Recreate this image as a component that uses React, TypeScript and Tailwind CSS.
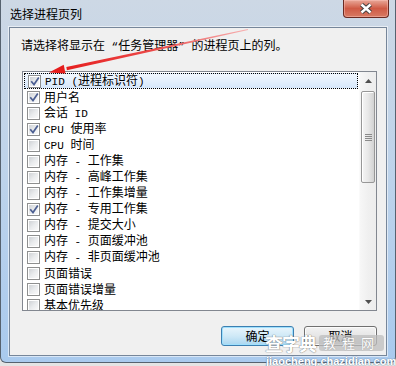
import React from "react";

const items: [string, boolean][] = [
  ["PID (进程标识符)", true],
  ["用户名", true],
  ["会话 ID", false],
  ["CPU 使用率", true],
  ["CPU 时间", false],
  ["内存 - 工作集", false],
  ["内存 - 高峰工作集", false],
  ["内存 - 工作集增量", false],
  ["内存 - 专用工作集", true],
  ["内存 - 提交大小", false],
  ["内存 - 页面缓冲池", false],
  ["内存 - 非页面缓冲池", false],
  ["页面错误", false],
  ["页面错误增量", false],
  ["基本优先级", false],
];

function Txt({ text }: { text: string }) {
  const parts = text.split(/([ -~“”]+)/).filter((p) => p.length > 0);
  return (
    <>
      {parts.map((p, i) =>
        /^[ -~“”]+$/.test(p) ? (
          <span key={i} className="font-['Liberation_Mono',monospace] text-[11px] whitespace-pre">
            {p}
          </span>
        ) : (
          <span key={i}>{p}</span>
        )
      )}
    </>
  );
}

function Check({ checked }: { checked: boolean }) {
  return (
    <div className="w-[13px] h-[13px] border border-[#8e8f8f] bg-white p-[1px] shrink-0">
      <div className="relative w-full h-full bg-gradient-to-br from-[#cfd2d6] via-[#e9ebed] to-[#fafafa]">
        {checked && (
          <svg className="absolute left-[-1px] top-[-1px]" width="11" height="11" viewBox="0 0 11 11">
            <path d="M2.2 5.2 L5 8.6 L9.8 1.6" stroke="#4c5f92" strokeWidth="1.7" fill="none" />
          </svg>
        )}
      </div>
    </div>
  );
}

function ScrollBar() {
  return (
    <div className="w-[17px] shrink-0 flex flex-col bg-gradient-to-r from-[#f7f7f7] via-[#f0f0f0] to-[#ededed] border-l border-[#fafafa]">
      <div className="h-[17px] flex items-center justify-center shrink-0">
        <svg width="7" height="4" viewBox="0 0 7 4">
          <path d="M0 4 L3.5 0 L7 4 Z" fill="#4f4f4f" />
        </svg>
      </div>
      <div className="mt-[2px] mx-[1px] h-[92px] shrink-0 rounded-[2px] border border-[#979797] bg-gradient-to-r from-[#f5f5f5] via-[#e8e8e8] to-[#d2d2d2] flex items-center justify-center shadow-[inset_1px_1px_0_#ffffff]">
        <div className="flex flex-col gap-[1px]">
          <div className="w-[7px] h-[1px] bg-[#8a8a8a]" />
          <div className="w-[7px] h-[1px] bg-[#8a8a8a]" />
          <div className="w-[7px] h-[1px] bg-[#8a8a8a]" />
          <div className="w-[7px] h-[1px] bg-[#8a8a8a]" />
        </div>
      </div>
      <div className="flex-1" />
      <div className="h-[17px] flex items-center justify-center shrink-0">
        <svg width="7" height="4" viewBox="0 0 7 4">
          <path d="M0 0 L3.5 4 L7 0 Z" fill="#4f4f4f" />
        </svg>
      </div>
    </div>
  );
}

export default function App() {
  return (
    <div className="relative w-[396px] h-[366px] bg-[#e4e4e4] overflow-hidden font-['Noto_Sans_CJK_SC',sans-serif] text-[12px] leading-[16px] text-black">
      <div className="w-[396px] h-[363px] flex flex-col rounded-b-[6px] border-x border-b border-[#56626f] bg-gradient-to-b from-[#cdd8e5] via-[#bdd3eb] to-[#a9caee]">
        {/* title bar */}
        <div className="h-[27px] flex items-start pl-[9px] pr-[6px] shrink-0">
          <div className="mt-[6px]">选择进程页列</div>
          <div className="ml-auto w-[46px] h-[18px] rounded-b-[4px] border border-t-0 border-[#6a2a22] bg-gradient-to-b from-[#e8a899] via-[#cf5a45] to-[#d77a63] flex items-center justify-center shadow-[inset_0_0_0_1px_rgba(255,200,190,0.45)]">
            <svg width="14" height="11" viewBox="0 0 14 11">
              <path d="M2.5 1.5 L11.5 9.5 M11.5 1.5 L2.5 9.5" stroke="#3f3f3f" strokeWidth="4.4" fill="none" />
              <path d="M2.5 1.5 L11.5 9.5 M11.5 1.5 L2.5 9.5" stroke="#ffffff" strokeWidth="2.4" fill="none" />
            </svg>
          </div>
        </div>

        {/* client area */}
        <div className="mx-[8px] mb-[6px] flex-1 border border-[#76869a] bg-[#f0f0f0] flex flex-col pl-[12px] pr-[9px] shadow-[0_0_0_1px_rgba(255,255,255,0.55)]">
          <div className="mt-[9px] ml-[-1px] h-[16px] whitespace-nowrap">
            <Txt text="请选择将显示在 “任务管理器” 的进程页上的列。" />
          </div>

          <div className="mt-[18px] h-[240px] border border-[#828790] bg-white flex">
            <div className="flex-1 pt-[1px] pl-[1px] pr-[1px] overflow-hidden">
              {items.map(([label, checked], i) => (
                <div
                  key={i}
                  className={
                    "h-[16px] flex items-center pl-[3px] " +
                    (i === 0
                      ? "border border-dotted border-black bg-gradient-to-b from-[#f1f7fe] to-[#d6e7fb] pl-[2px]"
                      : "")
                  }
                >
                  <Check checked={checked} />
                  <div className="ml-[4px] whitespace-nowrap">
                    <Txt text={label} />
                  </div>
                </div>
              ))}
            </div>
            <ScrollBar />
          </div>

          <div className="mt-[15px] flex justify-end gap-[10px]">
            <div className="w-[73px] h-[20px] rounded-[3px] border border-[#3c7fb1] bg-gradient-to-b from-[#e9f5fc] via-[#cfe9f7] to-[#a9d6f0] shadow-[inset_0_0_0_1px_#9fe0fd] flex items-center justify-center">
              确定
            </div>
            <div className="w-[73px] h-[20px] rounded-[3px] border border-[#707070] bg-gradient-to-b from-[#f2f2f2] via-[#e6e6e6] to-[#cfcfcf] shadow-[inset_0_0_0_1px_#fbfbfb] flex items-center justify-center">
              取消
            </div>
          </div>
        </div>
      </div>

      {/* red arrow annotation */}
      <svg className="absolute left-0 top-0 pointer-events-none" width="396" height="366" viewBox="0 0 396 366">
        <defs>
          <linearGradient id="arrowGrad" x1="248" y1="29" x2="60" y2="70" gradientUnits="userSpaceOnUse">
            <stop offset="0" stopColor="#f7b3b3" />
            <stop offset="0.5" stopColor="#ec4a4a" />
            <stop offset="1" stopColor="#e51c1c" />
          </linearGradient>
        </defs>
        <polygon points="248.1,30.1 247.9,29.1 66.3,67.1 66.9,70.3" fill="url(#arrowGrad)" />
        <polygon points="49,72.5 63.7,64.7 65.5,73.5" fill="#e51c1c" />
      </svg>

      {/* watermark */}
      <div className="absolute left-[265px] top-[332px] pointer-events-none flex items-center gap-[3px]">
        <div className="text-[18px] leading-[22px] font-bold text-white tracking-[-1px] [text-shadow:0_0_1px_#777,0_0_1px_#777]">
          查字典
        </div>
        <div className="h-[16px] px-[4px] rounded-[3px] bg-[rgba(190,190,190,0.75)] text-[13px] leading-[16px] text-white tracking-[6px] [text-shadow:0_0_1px_#888]">
          教程网
        </div>
      </div>
      <div className="absolute left-[266px] top-[355px] pointer-events-none text-[11px] leading-[12px] font-bold font-['Liberation_Sans',sans-serif] text-white [text-shadow:0_0_1px_#6a7f99,0_0_1px_#6a7f99]">
        jiaocheng.chazidian.com
      </div>
    </div>
  );
}
